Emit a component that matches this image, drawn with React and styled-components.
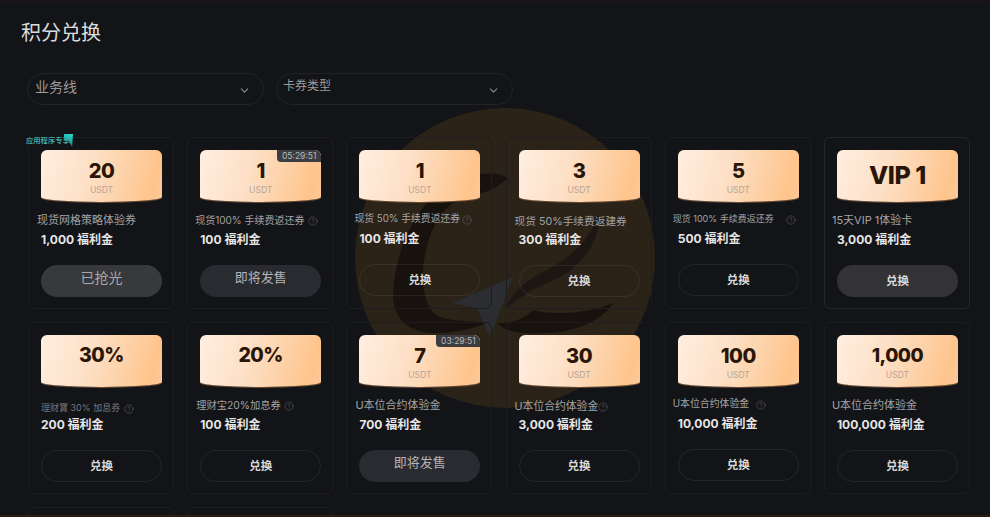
import React from 'react';
import styled, { createGlobalStyle } from 'styled-components';
import { ChevronDown, CircleHelp } from 'lucide-react';

const GlobalStyle = createGlobalStyle`
  html, body {
    margin: 0;
    height: 517px;
    overflow: hidden;
    background: #131417;
  }
  * { box-sizing: border-box; }
`;

const Page = styled.main`
  position: relative;
  height: 517px;
  overflow: hidden;
  padding: 19px 20px 0 28px;
  background: #131417;
  border-top: 2px solid #1a1318;
  font-family: Inter, "Noto Sans CJK SC", sans-serif;

  &:after {
    content: '';
    position: absolute;
    left: 0;
    right: 0;
    bottom: 0;
    height: 2px;
    background: #2a1d10;
  }
`;

const Watermark = styled.svg`
  position: absolute;
  left: 340px;
  top: 104px;
  width: 330px;
  height: 320px;
`;

const Title = styled.h1`
  position: relative;
  margin: 0 0 0 -7px;
  font-size: 20px;
  line-height: 24px;
  font-weight: 400;
  color: #dcdcdc;
`;

const Filters = styled.div`
  position: relative;
  display: flex;
  gap: 12px;
  margin: 28px 0 32px -1px;
`;

const Select = styled.div`
  display: flex;
  align-items: center;
  justify-content: space-between;
  width: 237px;
  height: 32px;
  padding: 0 12px 0 ${p => p.$small ? 6 : 7}px;
  border: 1px solid #222327;
  border-radius: 16px;
  color: #9a9a9c;
  font-size: ${p => p.$small ? 12 : 14}px;

  span { margin-top: -${p => p.$small ? 10 : 6}px; }
  svg { margin-top: 3px; color: #8c8c8e; }
`;

const Grid = styled.div`
  position: relative;
  display: grid;
  grid-template-columns: repeat(6, 146px);
  grid-auto-rows: 172px;
  gap: 13px 13.2px;
`;

const Card = styled.article`
  position: relative;
  padding: 12px 12px 0 12px;
  border: 1px solid ${p => p.$strong ? '#26272b' : '#1d1d20'};
  border-radius: 6px;
`;

const AppBadge = styled.span`
  position: absolute;
  left: -3px;
  top: -3px;
  width: 47px;
  height: 12px;
  font-size: 7.3px;
  line-height: 12px;
  white-space: nowrap;
  color: #4fd8d0;

  &:after {
    content: '';
    position: absolute;
    right: 0;
    top: -1px;
    width: 9px;
    height: 13px;
    background: linear-gradient(200deg, #2fe0d2 0%, #1d9c98 60%, #115f60 100%);
    clip-path: polygon(0 0, 100% 0, 90% 100%, 55% 55%, 0 35%);
  }
`;

const Coupon = styled.div`
  position: relative;
  display: flex;
  flex-direction: column;
  align-items: center;
  width: 121px;
  height: 52px;
  padding-top: ${p => p.$top}px;
  border-radius: 6px 6px 60px 60px / 6px 6px 5px 5px;
  background: linear-gradient(105deg, #ffeee0 0%, #fde0c6 40%, #fdd0a4 70%, #ffc48c 90%, #fcc89b 100%);
  box-shadow: 0 1px 0 #6b4a30;
  overflow: hidden;
`;

const Amount = styled.strong`
  font-size: ${p => p.$size}px;
  line-height: 24px;
  font-weight: 800;
  letter-spacing: -0.5px;
  color: #2a1608;
`;

const Unit = styled.span`
  margin-top: 2px;
  font-size: 8.5px;
  line-height: 11px;
  color: #b7a598;
`;

const Timer = styled.span`
  position: absolute;
  top: 0;
  right: 0;
  width: 44px;
  height: 12px;
  text-align: center;
  border-radius: 0 6px 0 4px;
  background: #3c3d41;
  color: #b9babc;
  font-size: 8.5px;
  line-height: 12px;
`;

const NameRow = styled.div`
  display: flex;
  align-items: center;
  height: 16px;
  margin-top: ${p => 9 + (p.$dy || 0)}px;
  margin-bottom: ${p => 0 - (p.$dy || 0)}px;
  margin-left: ${p => p.$dx || 0}px;
  white-space: nowrap;
  font-size: ${p => p.$size || 11}px;
  color: ${p => p.$dim ? '#77777a' : '#a3a3a5'};

  svg { margin: 3px 0 0 ${p => p.$gap}px; color: #5c5c60; flex: none; }
`;

const Points = styled.div`
  margin-top: 4px;
  height: 18px;
  font-size: 12px;
  line-height: 18px;
  font-weight: 700;
  color: #e6e6e6;
`;

const Action = styled.div`
  display: flex;
  align-items: center;
  justify-content: center;
  width: 121px;
  height: 32px;
  margin-top: 16px;
  border-radius: 16px;
  border: 1px solid ${p => p.$kind === 'outline' ? 'rgba(255, 255, 255, 0.07)' : 'transparent'};
  background: ${p => ({ sold: '#38393d', soon: '#2a2b30', filled: '#333336', outline: 'transparent' }[p.$kind])};
  color: ${p => ({ sold: '#a8a8aa', soon: '#b4b4b6', filled: '#d8d8d8', outline: '#d8d8d8' }[p.$kind])};
  font-size: ${p => ({ sold: 14, soon: 13, filled: 11.5, outline: 11.5 }[p.$kind])}px;
  font-weight: ${p => (p.$kind === 'filled' || p.$kind === 'outline') ? 700 : 400};

  span { margin-top: ${p => ({ sold: -8, soon: -10, filled: -2, outline: -2 }[p.$kind])}px; }
`;

const actionLabel = { sold: '已抢光', soon: '即将发售', filled: '兑换', outline: '兑换' };

const coupons = [
  { amount: '20', name: '现货网格策略体验券', points: '1,000', action: 'sold', dx: -4, badge: true },
  { amount: '1', name: '现货100% 手续费返还券', points: '100', action: 'soon', dx: -5, size: 10, gap: 3, timer: '05:29:51' },
  { amount: '1', name: '现货 50% 手续费返还券', points: '100', action: 'outline', dx: -5, dy: -1, size: 9.8, gap: 2 },
  { amount: '3', name: '现货 50%手续费返建券', points: '300', action: 'outline', dx: -4, dy: 1, size: 10.7 },
  { amount: '5', name: '现货 100% 手续费返还券', points: '500', action: 'outline', dx: -5, dy: -1, size: 9, gap: 12 },
  { amount: 'VIP 1', top: 13, big: 25, name: '15天VIP 1体验卡', points: '3,000', action: 'filled', dx: -5, strong: true },
  { amount: '30%', top: 8, big: 19.5, name: '理财寶 30% 加息券', points: '200', action: 'outline', dy: 3, size: 9, dim: true, gap: 4 },
  { amount: '20%', top: 8, big: 19.5, name: '理财宝20%加息券', points: '100', action: 'outline', dx: -4, size: 10.3, gap: 3 },
  { amount: '7', name: 'U本位合约体验金', points: '700', action: 'soon', dx: -4, timer: '03:29:51' },
  { amount: '30', name: 'U本位合约体验金', points: '3,000', action: 'outline', dx: -4, dy: 1, size: 10.8, gap: 0 },
  { amount: '100', name: 'U本位合约体验金', points: '10,000', action: 'outline', dx: -5, dy: -1, size: 9.9, gap: 7 },
  { amount: '1,000', big: 19, name: 'U本位合约体验金', points: '100,000', action: 'outline', dx: -5 },
];

function CouponCard({ c }) {
  const hasUnit = !c.top;
  return (
    <Card $strong={c.strong}>
      {c.badge && <AppBadge>应用程序专享</AppBadge>}
      <Coupon $top={c.top || 9}>
        {c.timer && <Timer>{c.timer}</Timer>}
        <Amount $size={c.big || 20}>{c.amount}</Amount>
        {hasUnit && <Unit>USDT</Unit>}
      </Coupon>
      <NameRow $dx={c.dx} $dy={c.dy} $size={c.size} $dim={c.dim} $gap={c.gap}>
        {c.name}
        {c.gap !== undefined && <CircleHelp size={10} strokeWidth={1.5} />}
      </NameRow>
      <Points>{c.points} 福利金</Points>
      <Action $kind={c.action}><span>{actionLabel[c.action]}</span></Action>
    </Card>
  );
}

export default function App() {
  return (
    <>
      <GlobalStyle />
      <Page>
        <Watermark viewBox="0 0 330 320">
          <circle cx="165" cy="152" r="150" fill="#2b2218" />
          <path d="M168 72 C150 62 120 70 97 87 C70 110 55 150 53 187 C53 215 70 228 100 227 C120 226 135 222 147 217 C130 215 110 215 100 211 C88 205 83 190 83 170 C83 140 95 110 113 97 C130 88 148 90 168 72 Z" fill="#17120e" />
          <path d="M273 197 C262 215 235 226 205 227 C180 228 165 226 157 217 C175 218 187 210 193 204 C205 208 245 210 273 197 Z" fill="#17120e" />
          <path d="M258 108 C262 135 240 165 205 178 C190 184 175 195 165 203 C172 185 190 172 205 165 C230 152 250 135 258 108 Z" fill="#1c1712" />
          <path d="M173 171 L112 197 L137 202 L150 231 Z" fill="#2b2d31" />
        </Watermark>
        <Title>积分兑换</Title>
        <Filters>
          <Select><span>业务线</span><ChevronDown size={13} /></Select>
          <Select $small><span>卡券类型</span><ChevronDown size={13} /></Select>
        </Filters>
        <Grid>
          {coupons.map((c, i) => <CouponCard key={i} c={c} />)}
          <Card />
          <Card />
        </Grid>
      </Page>
    </>
  );
}
